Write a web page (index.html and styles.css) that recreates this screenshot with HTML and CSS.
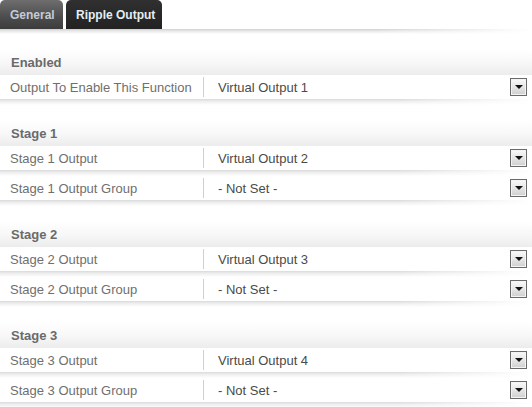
FILE: index.html
```html
<!DOCTYPE html>
<html>
<head>
<meta charset="utf-8">
<link rel="stylesheet" href="styles.css">
</head>
<body>
<div class="tabs">
  <div class="tab tab-general">General</div>
  <div class="tab tab-active">Ripple Output</div>
</div>
<div class="tab-shadow"></div>
<div class="content">
  <div class="section">
    <div class="section-head">Enabled</div>
    <div class="row"><div class="label">Output To Enable This Function</div><div class="sep"></div><div class="value">Virtual Output 1</div><div class="btn"><span class="tri"></span></div></div>
    <div class="row-shadow"></div>
  </div>
  <div class="section">
    <div class="section-head">Stage 1</div>
    <div class="row"><div class="label">Stage 1 Output</div><div class="sep"></div><div class="value">Virtual Output 2</div><div class="btn"><span class="tri"></span></div></div>
    <div class="row-shadow"></div>
    <div class="row"><div class="label">Stage 1 Output Group</div><div class="sep"></div><div class="value">- Not Set -</div><div class="btn"><span class="tri"></span></div></div>
    <div class="row-shadow"></div>
  </div>
  <div class="section">
    <div class="section-head">Stage 2</div>
    <div class="row"><div class="label">Stage 2 Output</div><div class="sep"></div><div class="value">Virtual Output 3</div><div class="btn"><span class="tri"></span></div></div>
    <div class="row-shadow"></div>
    <div class="row"><div class="label">Stage 2 Output Group</div><div class="sep"></div><div class="value">- Not Set -</div><div class="btn"><span class="tri"></span></div></div>
    <div class="row-shadow"></div>
  </div>
  <div class="section">
    <div class="section-head">Stage 3</div>
    <div class="row"><div class="label">Stage 3 Output</div><div class="sep"></div><div class="value">Virtual Output 4</div><div class="btn"><span class="tri"></span></div></div>
    <div class="row-shadow"></div>
    <div class="row"><div class="label">Stage 3 Output Group</div><div class="sep"></div><div class="value">- Not Set -</div><div class="btn"><span class="tri"></span></div></div>
    <div class="row-shadow"></div>
  </div>
</div>
</body>
</html>
```

FILE: styles.css
```css
html, body {
  margin: 0;
  padding: 0;
  background: #fff;
  font-family: "Liberation Sans", Arial, sans-serif;
  font-size: 13px;
  overflow: hidden;
}
.tabs {
  display: flex;
  gap: 3px;
  height: 29px;
}
.tab {
  box-sizing: border-box;
  padding-left: 10px;
  line-height: 30px;
  font-size: 12px;
  font-weight: bold;
  white-space: nowrap;
  border-radius: 5px 5px 0 0;
}
.tab-general {
  width: 63px;
  background: linear-gradient(to bottom, #6e6e6e 0%, #4c4c4c 60%, #3c3c3c 100%);
  color: #c3ccd6;
}
.tab-active {
  width: 96px;
  background: linear-gradient(to bottom, #303030 0%, #222 100%);
  color: #e6edf4;
}
.tab-shadow {
  height: 5px;
  background:
    linear-gradient(to right, rgba(255,255,255,0) 0%, rgba(255,255,255,0) 70%, #fff 100%),
    linear-gradient(to bottom, #cfcfcf 0%, #e8e8e8 40%, #fff 100%);
}
.content {
  padding-top: 15px;
}
.section {
  margin-bottom: 15px;
}
.section-head {
  height: 26px;
  line-height: 27px;
  padding-left: 11px;
  font-weight: bold;
  color: #6a6a6a;
  background: linear-gradient(to bottom, #fff 0%, #f8f8f8 50%, #ececec 100%);
}
.row {
  height: 24px;
  display: flex;
  align-items: center;
  background: #fff;
}
.label {
  width: 193px;
  padding-left: 10px;
  color: #6f6f6f;
  white-space: nowrap;
}
.sep {
  width: 1px;
  height: 20px;
  background: #cfcfcf;
}
.value {
  flex: 1;
  padding-left: 14px;
  color: #4a4a4a;
  white-space: nowrap;
}
.btn {
  width: 15px;
  height: 16px;
  margin-right: 5px;
  border: 1px solid #6a6a6a;
  box-shadow: inset 0 0 0 1px #f4f4f4;
  background: linear-gradient(to bottom, #fafafa 0%, #e6e6e6 50%, #cfcfcf 100%);
  display: flex;
  align-items: center;
  justify-content: center;
}
.tri {
  width: 0;
  height: 0;
  border-left: 4px solid transparent;
  border-right: 4px solid transparent;
  border-top: 4px solid #111;
  margin-top: -1px;
}
.row-shadow {
  height: 6px;
  background:
    linear-gradient(to right, rgba(255,255,255,0) 0%, rgba(255,255,255,0) 75%, #fff 100%),
    linear-gradient(to bottom, #dadada 0%, #eee 40%, #fff 100%);
}
```
